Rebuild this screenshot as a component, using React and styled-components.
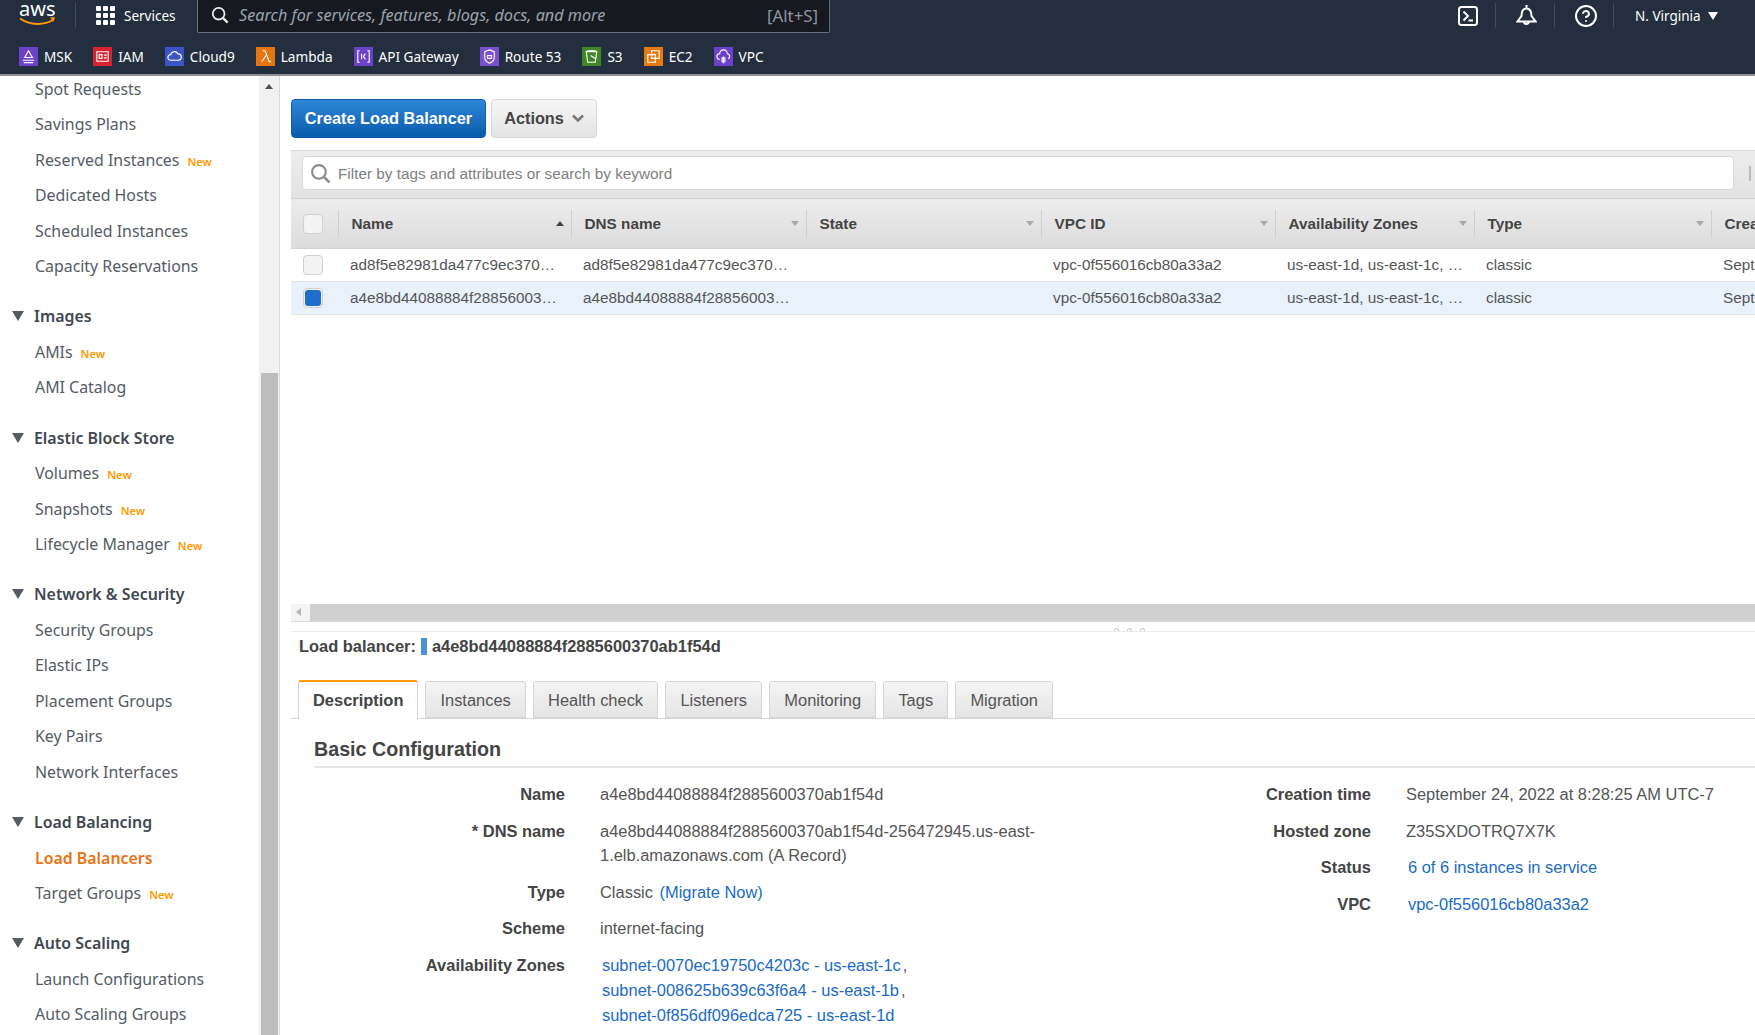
import React from "react";
import styled, { createGlobalStyle } from "styled-components";
import { CircleHelp } from "lucide-react";

const UI_FONT = `"Noto Sans", "Open Sans", sans-serif`;
const TABLE_FONT = `"Liberation Sans", Arial, sans-serif`;

const GRID_COLUMNS = "48px 233px 235px 235px 234px 199px 237px 260px";

const SHORTCUTS = [
    { name: "MSK", color: "#6b42c9", glyph: "M4 14h12M6 11h8M10 4l4 7H6zM5 16.5h10" },
    { name: "IAM", color: "#d9222f", glyph: "M4 5h12v10H4zM6.5 8h3v4h-3zM11.5 8.5h3M11.5 11.5h3" },
    { name: "Cloud9", color: "#3b55c9", glyph: "M6 14a3 3 0 0 1 0-6 4 4 0 0 1 7.5-.8A3.4 3.4 0 0 1 14 14z" },
    { name: "Lambda", color: "#e57512", glyph: "M7 4h2.5L14 15.5h2M10.5 9L6 15.5" },
    { name: "API Gateway", color: "#6b42c9", glyph: "M6 4H4v12h2M14 4h2v12h-2M8 7v6M12 7l-2 3 2 3" },
    { name: "Route 53", color: "#7a4fd0", glyph: "M10 3l5 2v6c0 3-2.500 5-5 6-2.500-1-5-3-5-6V5zM8 9h4v3H8z" },
    { name: "S3", color: "#3f8624", glyph: "M4.500 5h11l-1.500 11H6zM4.500 5c0-1.500 11-1.500 11 0M9 9l5 3" },
    { name: "EC2", color: "#e8790f", glyph: "M8 4h8v8H8zM4 8h8v8H4z" },
    { name: "VPC", color: "#6b42c9", glyph: "M6 13a3 3 0 0 1 0-6 4 4 0 0 1 8 0 3 3 0 0 1 1 5.500M10 10v7M8.500 11.500h3v4h-3z" },
];

const NAV_GROUPS = [
    {
        items: [
            { label: "Spot Requests" },
            { label: "Savings Plans" },
            { label: "Reserved Instances", isNew: true },
            { label: "Dedicated Hosts" },
            { label: "Scheduled Instances" },
            { label: "Capacity Reservations" },
        ],
    },
    {
        title: "Images",
        items: [{ label: "AMIs", isNew: true }, { label: "AMI Catalog" }],
    },
    {
        title: "Elastic Block Store",
        items: [
            { label: "Volumes", isNew: true },
            { label: "Snapshots", isNew: true },
            { label: "Lifecycle Manager", isNew: true },
        ],
    },
    {
        title: "Network & Security",
        items: [
            { label: "Security Groups" },
            { label: "Elastic IPs" },
            { label: "Placement Groups" },
            { label: "Key Pairs" },
            { label: "Network Interfaces" },
        ],
    },
    {
        title: "Load Balancing",
        items: [
            { label: "Load Balancers", active: true },
            { label: "Target Groups", isNew: true },
        ],
    },
    {
        title: "Auto Scaling",
        items: [{ label: "Launch Configurations" }, { label: "Auto Scaling Groups" }],
    },
];

const COLUMNS = [
    { label: "Name", sorted: true },
    { label: "DNS name" },
    { label: "State" },
    { label: "VPC ID" },
    { label: "Availability Zones" },
    { label: "Type" },
    { label: "Creation time" },
];

const ROWS = [
    {
        cells: [
            "ad8f5e82981da477c9ec370…",
            "ad8f5e82981da477c9ec370…",
            "",
            "vpc-0f556016cb80a33a2",
            "us-east-1d, us-east-1c, …",
            "classic",
            "September 24, 2022 at 8:20:11 AM UTC-7",
        ],
    },
    {
        selected: true,
        cells: [
            "a4e8bd44088884f28856003…",
            "a4e8bd44088884f28856003…",
            "",
            "vpc-0f556016cb80a33a2",
            "us-east-1d, us-east-1c, …",
            "classic",
            "September 24, 2022 at 8:28:25 AM UTC-7",
        ],
    },
];

const TABS = ["Description", "Instances", "Health check", "Listeners", "Monitoring", "Tags", "Migration"];

const GlobalStyle = createGlobalStyle`
    html, body, #root {
        margin: 0;
        height: 100%;
        overflow: hidden;
        background: #fff;
    }

    * {
        box-sizing: border-box;
    }
`;

const Page = styled.div`
    display: flex;
    flex-direction: column;
    width: 1755px;
    height: 1035px;
    overflow: hidden;
`;

const Header = styled.header`
    flex: none;
    height: 76px;
    background: #232f3e;
    border-bottom: 2px solid #8d9196;
    color: #fff;
    font-family: ${UI_FONT};
`;

const TopBar = styled.div`
    display: flex;
    align-items: flex-start;
    height: 37px;
    padding-left: 18px;
`;

const LogoBox = styled.div`
    width: 57px;
`;

const Divider = styled.span`
    flex: none;
    width: 1px;
    height: 25px;
    margin-top: 3px;
    background: #414c5a;
`;

const ServicesButton = styled.div`
    display: flex;
    align-items: center;
    gap: 9px;
    height: 31px;
    margin-left: 20px;
    width: 101px;
    font-size: 13.5px;
`;

const SearchBox = styled.div`
    display: flex;
    align-items: center;
    width: 633px;
    height: 33px;
    padding: 0 11px 2px 13px;
    background: #16191f;
    border: 1px solid #687078;
    border-top: none;
    border-radius: 0 0 2px 2px;
`;

const SearchPlaceholder = styled.span`
    flex: 1;
    margin-left: 10px;
    color: #9ba3ad;
    font-size: 16.200px;
    font-style: italic;
`;

const SearchHint = styled.span`
    color: #8f969f;
    font-size: 16.800px;
`;

const RightTools = styled.div`
    display: flex;
    align-items: flex-start;
    margin-left: auto;
    padding-right: 15px;
`;

const ToolIcon = styled.div`
    display: flex;
    align-items: center;
    justify-content: center;
    width: 58px;
    height: 31px;
    padding-left: 3px;
`;

const RegionButton = styled.div`
    display: flex;
    align-items: center;
    gap: 7px;
    height: 31px;
    width: 126px;
    padding-left: 21px;
    font-size: 13.5px;
`;

const ShortcutBar = styled.div`
    display: flex;
    align-items: center;
    gap: 21px;
    height: 37px;
    padding: 2px 0 0 19px;
`;

const Shortcut = styled.div`
    display: flex;
    align-items: center;
    gap: 6px;
    font-size: 13.600px;
`;

const Body = styled.div`
    flex: 1;
    display: flex;
    min-height: 0;
`;

const Sidebar = styled.aside`
    flex: none;
    display: flex;
    width: 280px;
    border-right: 1px solid #d5dbdb;
`;

const NavList = styled.nav`
    flex: none;
    width: 259px;
    overflow: hidden;
    font-family: ${UI_FONT};
    font-size: 15.900px;
    color: #545b64;
`;

const NavInner = styled.div`
    margin-top: -5px;
`;

const NavGroup = styled.div`
    margin-bottom: 14.700px;
`;

const NavTitle = styled.div`
    display: flex;
    align-items: center;
    height: 35.500px;
    padding-left: 12px;
    gap: 10px;
    color: #414750;
    font-weight: 600;
`;

const Triangle = styled.span`
    width: 0;
    height: 0;
    border-left: 6.500px solid transparent;
    border-right: 6.500px solid transparent;
    border-top: 10px solid #545b64;
`;

const NavItem = styled.div`
    display: flex;
    align-items: center;
    height: 35.500px;
    padding-left: 35px;
    color: ${(props) => (props.$active ? "#ec7211" : "#545b64")};
    font-weight: ${(props) => (props.$active ? 600 : 400)};
`;

const NewTag = styled.span`
    margin: 3px 0 0 8px;
    color: #ff9900;
    font-size: 11.200px;
    font-weight: 600;
`;

const VScroll = styled.div`
    flex: none;
    display: flex;
    flex-direction: column;
    align-items: center;
    width: 20px;
    background: #f1f1f1;
`;

const ScrollUp = styled.span`
    flex: none;
    width: 0;
    height: 0;
    margin-top: 8px;
    border-left: 4.500px solid transparent;
    border-right: 4.500px solid transparent;
    border-bottom: 5px solid #505050;
`;

const VThumb = styled.div`
    flex: none;
    width: 17px;
    height: 662px;
    margin-top: 284px;
    background: #bdbdbd;
`;

const Main = styled.main`
    flex: 1;
    min-width: 0;
    display: flex;
    flex-direction: column;
    padding-left: 11px;
    overflow: hidden;
    font-family: ${TABLE_FONT};
    color: #444;
`;

const ListPane = styled.section`
    flex: 1;
    display: flex;
    flex-direction: column;
    min-height: 0;
`;

const Toolbar = styled.div`
    flex: none;
    display: flex;
    gap: 5px;
    padding: 23px 0 12px;
`;

const PrimaryButton = styled.div`
    display: flex;
    align-items: center;
    justify-content: center;
    width: 195px;
    height: 39px;
    padding-bottom: 1px;
    border: 1px solid #0f5fae;
    border-radius: 4px;
    background: linear-gradient(#2f86d8, #0a5cad);
    color: #fff;
    font-size: 16.300px;
    font-weight: bold;
`;

const SecondaryButton = styled.div`
    display: flex;
    align-items: center;
    justify-content: center;
    gap: 8px;
    width: 106px;
    height: 39px;
    padding-bottom: 1px;
    border: 1px solid #d8d8d8;
    border-radius: 4px;
    background: linear-gradient(#f7f7f7, #e3e3e3);
    color: #444;
    font-size: 16.300px;
    font-weight: bold;
`;

const FilterBand = styled.div`
    flex: none;
    display: flex;
    align-items: center;
    height: 49px;
    padding: 0 0 3px 11px;
    background: linear-gradient(#ededed, #e2e2e2);
    border-top: 1px solid #d9d9d9;
    border-bottom: 1px solid #d2d2d2;
`;

const FilterInput = styled.div`
    display: flex;
    align-items: center;
    gap: 7px;
    width: 1432px;
    height: 34px;
    padding: 1px 0 0 7px;
    background: #fff;
    border: 1px solid #d8d8d8;
    border-radius: 4px;
    color: #808080;
    font-size: 15.300px;
`;

const FilterTick = styled.span`
    width: 2px;
    height: 15px;
    margin-left: 15px;
    background: #bbb;
`;

const TableHead = styled.div`
    flex: none;
    display: grid;
    grid-template-columns: ${GRID_COLUMNS};
    align-items: center;
    height: 50px;
    background: linear-gradient(#ececec, #dcdcdc);
    border-bottom: 1px solid #d2d2d2;
    font-size: 15.300px;
    font-weight: bold;
    color: #444;
`;

const HeadCheckCell = styled.div`
    display: flex;
    align-items: center;
    height: 28px;
    padding-left: 12px;
    border-right: 1px solid #cfcfcf;
`;

const HeadCell = styled.div`
    display: flex;
    align-items: center;
    justify-content: space-between;
    height: 28px;
    padding: 0 7px 0 12.500px;
    border-right: 1px solid #cfcfcf;
    white-space: nowrap;
    overflow: hidden;

    &:last-child {
        border-right: none;
    }
`;

const SortArrow = styled.span`
    flex: none;
    width: 0;
    height: 0;
    border-left: 4.500px solid transparent;
    border-right: 4.500px solid transparent;
    ${(props) =>
        props.$up ? "border-bottom: 5px solid #444;" : "border-top: 5px solid #a9a9a9;"}
`;

const TableRow = styled.div`
    flex: none;
    display: grid;
    grid-template-columns: ${GRID_COLUMNS};
    align-items: center;
    height: 33px;
    background: ${(props) => (props.$selected ? "#e9f1fb" : "#fff")};
    border-bottom: 1px solid #e3e3e3;
    font-size: 15.300px;
    color: #555;
`;

const CheckCell = styled.div`
    padding-left: 12px;
`;

const Cell = styled.div`
    padding-left: 11px;
    white-space: nowrap;
    overflow: hidden;
`;

const CheckBox = styled.div`
    display: flex;
    align-items: center;
    justify-content: center;
    width: 20px;
    height: 20px;
    border: 1px solid #d0d0d0;
    border-radius: 4px;
    background: #f4f4f4;
`;

const CheckMark = styled.span`
    width: 16px;
    height: 16px;
    border-radius: 3px;
    background: #1d6fcb;
`;

const Spacer = styled.div`
    flex: 1;
`;

const HScroll = styled.div`
    flex: none;
    display: flex;
    align-items: center;
    height: 18px;
    padding-bottom: 1px;
    background: #f4f4f4;
    border-bottom: 1px solid #dcdcdc;
`;

const ScrollLeft = styled.span`
    flex: none;
    width: 0;
    height: 0;
    margin: 0 9px 0 5px;
    border-top: 4px solid transparent;
    border-bottom: 4px solid transparent;
    border-right: 5px solid #b5b5b5;
`;

const HThumb = styled.div`
    flex: 1;
    height: 17px;
    background: #d0d0d0;
`;

const Splitter = styled.div`
    flex: none;
    display: flex;
    justify-content: center;
    align-items: flex-end;
    gap: 8px;
    height: 10px;
    padding-left: 212px;
    border-bottom: 1px solid #ececec;
`;

const SplitDot = styled.span`
    width: 5px;
    height: 3px;
    border: 1px solid #c9c9c9;
    border-bottom: none;
    border-radius: 3px 3px 0 0;
`;

const DetailPane = styled.section`
    flex: none;
    height: 403px;
    font-size: 16.450px;
`;

const SelectedBar = styled.div`
    display: flex;
    align-items: center;
    height: 30px;
    padding: 0 0 2px 8px;
    font-weight: bold;
    color: #444;
`;

const StatusSwatch = styled.span`
    width: 6px;
    height: 17px;
    margin: 0 5px 0 5px;
    background: #4b91d9;
`;

const TabBar = styled.div`
    display: flex;
    align-items: flex-end;
    gap: 6.700px;
    height: 39px;
    margin-top: 18px;
    padding-left: 7px;
    border-bottom: 1px solid #d5d5d5;
`;

const Tab = styled.div`
    display: flex;
    align-items: center;
    padding: ${(props) => (props.$active ? "0 14px" : "1px 14.300px 0")};
    height: ${(props) => (props.$active ? "39px" : "37px")};
    margin-bottom: ${(props) => (props.$active ? "-1px" : "0")};
    border: 1px solid #d5d5d5;
    border-bottom: ${(props) => (props.$active ? "none" : "1px solid #d5d5d5")};
    border-top: ${(props) => (props.$active ? "2px solid #ff9900" : "1px solid #d5d5d5")};
    border-radius: 3px 3px 0 0;
    background: ${(props) => (props.$active ? "#fff" : "linear-gradient(#f5f5f5, #e4e4e4)")};
    color: ${(props) => (props.$active ? "#444" : "#555")};
    font-weight: ${(props) => (props.$active ? "bold" : "normal")};
`;

const DetailBody = styled.div`
    padding-left: 23px;
`;

const SectionTitle = styled.h2`
    display: flex;
    align-items: center;
    height: 49px;
    margin: 0;
    padding-top: 14px;
    border-bottom: 2px solid #e6e6e6;
    color: #444;
    font-size: 19.700px;
    font-weight: bold;
`;

const Columns = styled.div`
    display: flex;
    padding-top: 14px;
`;

const FieldGrid = styled.dl`
    display: grid;
    grid-template-columns: ${(props) => props.$labelWidth}px ${(props) => props.$valueWidth}px;
    column-gap: 35px;
    row-gap: 12px;
    margin: 0;
    line-height: 24.500px;
    align-content: start;
`;

const FieldLabel = styled.dt`
    text-align: right;
    font-weight: bold;
    color: #444;
`;

const FieldValue = styled.dd`
    margin: 0;
    color: #555;
`;

const FieldLink = styled.a`
    color: #1a6bc4;
`;

const MigrateLink = styled(FieldLink)`
    margin-left: 2px;
`;

const LinkValue = styled.div`
    padding-left: 2px;
    line-height: 25px;
    color: #555;
`;

const Comma = styled.span`
    margin-left: 2px;
`;

function AwsLogo() {
    return (
        <svg width="42" height="28" viewBox="0 0 42 28">
            <text x="1" y="16" fill="#fff" fontFamily={UI_FONT} fontSize="20">aws</text>
            <path d="M2 18.500c10 7 24 7 33 1.500" fill="none" stroke="#ff9900" strokeWidth="2" />
            <path d="M32 17.500l5-.5-1.500 5z" fill="#ff9900" />
        </svg>
    );
}

function GridIcon() {
    const dots = [];
    for (let row = 0; row < 3; row++) {
        for (let col = 0; col < 3; col++) {
            dots.push(<rect key={row + "-" + col} x={col * 7} y={row * 7} width="5" height="5" rx="1" fill="#fff" />);
        }
    }
    return <svg width="19" height="19" viewBox="0 0 19 19">{dots}</svg>;
}

function SearchIcon({ color, size }) {
    return (
        <svg width={size} height={size} viewBox="0 0 20 20" fill="none" stroke={color} strokeWidth="2">
            <circle cx="8.500" cy="8.500" r="6.500" />
            <path d="M13.500 13.500L18.500 18.500" strokeWidth="2.500" />
        </svg>
    );
}

function TerminalIcon() {
    return (
        <svg width="20" height="20" viewBox="0 0 20 20" fill="none" stroke="#fff" strokeWidth="2">
            <rect x="1" y="1" width="18" height="18" rx="2.500" />
            <path d="M5.500 5.500l4.500 4.500-4.500 4.500M10.500 14.500h4.500" />
        </svg>
    );
}

function BellIcon() {
    return (
        <svg width="21" height="22" viewBox="0 0 21 22" fill="none" stroke="#fff" strokeWidth="2">
            <path d="M10.500 0v3M5.500 11c0-5 2-7.500 5-7.500s5 2.500 5 7.500l4 5.500H1.500zM8 16.500a2.500 2.500 0 0 0 5 0" />
        </svg>
    );
}

function ShortcutIcon({ color, glyph }) {
    return (
        <svg width="19" height="19" viewBox="0 0 20 20">
            <rect width="20" height="20" fill={color} />
            <path d={glyph} fill="none" stroke="#fff" strokeWidth="1.200" />
        </svg>
    );
}

function NavSection({ title, items }) {
    return (
        <NavGroup>
            {title ? (
                <NavTitle>
                    <Triangle />
                    {title}
                </NavTitle>
            ) : null}
            {items.map((item) => (
                <NavItem key={item.label} $active={item.active}>
                    {item.label}
                    {item.isNew ? <NewTag>New</NewTag> : null}
                </NavItem>
            ))}
        </NavGroup>
    );
}

export default function App() {
    return (
        <Page>
            <GlobalStyle />
            <Header>
                <TopBar>
                    <LogoBox>
                        <AwsLogo />
                    </LogoBox>
                    <Divider />
                    <ServicesButton>
                        <GridIcon />
                        Services
                    </ServicesButton>
                    <SearchBox>
                        <SearchIcon color="#eaeded" size={18} />
                        <SearchPlaceholder>Search for services, features, blogs, docs, and more</SearchPlaceholder>
                        <SearchHint>[Alt+S]</SearchHint>
                    </SearchBox>
                    <RightTools>
                        <ToolIcon><TerminalIcon /></ToolIcon>
                        <Divider />
                        <ToolIcon><BellIcon /></ToolIcon>
                        <Divider />
                        <ToolIcon><CircleHelp size={24} color="#fff" strokeWidth={2} /></ToolIcon>
                        <Divider />
                        <RegionButton>
                            N. Virginia
                            <svg width="10" height="8" viewBox="0 0 10 8"><path d="M0 0h10L5 8z" fill="#fff" /></svg>
                        </RegionButton>
                    </RightTools>
                </TopBar>
                <ShortcutBar>
                    {SHORTCUTS.map((item) => (
                        <Shortcut key={item.name}>
                            <ShortcutIcon color={item.color} glyph={item.glyph} />
                            {item.name}
                        </Shortcut>
                    ))}
                </ShortcutBar>
            </Header>
            <Body>
                <Sidebar>
                    <NavList>
                        <NavInner>
                            {NAV_GROUPS.map((group, index) => (
                                <NavSection key={"group-" + index} title={group.title} items={group.items} />
                            ))}
                        </NavInner>
                    </NavList>
                    <VScroll>
                        <ScrollUp />
                        <VThumb />
                    </VScroll>
                </Sidebar>
                <Main>
                    <ListPane>
                        <Toolbar>
                            <PrimaryButton>Create Load Balancer</PrimaryButton>
                            <SecondaryButton>
                                Actions
                                <svg width="12" height="9" viewBox="0 0 12 9"><path d="M1 1.500l5 5 5-5" fill="none" stroke="#777" strokeWidth="2.500" /></svg>
                            </SecondaryButton>
                        </Toolbar>
                        <FilterBand>
                            <FilterInput>
                                <SearchIcon color="#8c8c8c" size={21} />
                                Filter by tags and attributes or search by keyword
                            </FilterInput>
                            <FilterTick />
                        </FilterBand>
                        <TableHead>
                            <HeadCheckCell><CheckBox /></HeadCheckCell>
                            {COLUMNS.map((col) => (
                                <HeadCell key={col.label}>
                                    {col.label}
                                    <SortArrow $up={col.sorted} />
                                </HeadCell>
                            ))}
                        </TableHead>
                        {ROWS.map((row, index) => (
                            <TableRow key={"row-" + index} $selected={row.selected}>
                                <CheckCell>
                                    <CheckBox>{row.selected ? <CheckMark /> : null}</CheckBox>
                                </CheckCell>
                                {row.cells.map((text, cellIndex) => (
                                    <Cell key={"cell-" + cellIndex}>{text}</Cell>
                                ))}
                            </TableRow>
                        ))}
                        <Spacer />
                        <HScroll>
                            <ScrollLeft />
                            <HThumb />
                        </HScroll>
                        <Splitter>
                            <SplitDot />
                            <SplitDot />
                            <SplitDot />
                        </Splitter>
                    </ListPane>
                    <DetailPane>
                        <SelectedBar>
                            Load balancer:
                            <StatusSwatch />
                            a4e8bd44088884f2885600370ab1f54d
                        </SelectedBar>
                        <TabBar>
                            {TABS.map((tab, index) => (
                                <Tab key={tab} $active={index === 0}>{tab}</Tab>
                            ))}
                        </TabBar>
                        <DetailBody>
                            <SectionTitle>Basic Configuration</SectionTitle>
                            <Columns>
                                <FieldGrid $labelWidth={251} $valueWidth={440}>
                                    <FieldLabel>Name</FieldLabel>
                                    <FieldValue>a4e8bd44088884f2885600370ab1f54d</FieldValue>
                                    <FieldLabel>* DNS name</FieldLabel>
                                    <FieldValue>a4e8bd44088884f2885600370ab1f54d-256472945.us-east-1.elb.amazonaws.com (A Record)</FieldValue>
                                    <FieldLabel>Type</FieldLabel>
                                    <FieldValue>Classic <MigrateLink>(Migrate Now)</MigrateLink></FieldValue>
                                    <FieldLabel>Scheme</FieldLabel>
                                    <FieldValue>internet-facing</FieldValue>
                                    <FieldLabel>Availability Zones</FieldLabel>
                                    <FieldValue>
                                        <LinkValue><FieldLink>subnet-0070ec19750c4203c - us-east-1c</FieldLink><Comma>,</Comma></LinkValue>
                                        <LinkValue><FieldLink>subnet-008625b639c63f6a4 - us-east-1b</FieldLink><Comma>,</Comma></LinkValue>
                                        <LinkValue><FieldLink>subnet-0f856df096edca725 - us-east-1d</FieldLink></LinkValue>
                                    </FieldValue>
                                </FieldGrid>
                                <FieldGrid $labelWidth={331} $valueWidth={360}>
                                    <FieldLabel>Creation time</FieldLabel>
                                    <FieldValue>September 24, 2022 at 8:28:25 AM UTC-7</FieldValue>
                                    <FieldLabel>Hosted zone</FieldLabel>
                                    <FieldValue>Z35SXDOTRQ7X7K</FieldValue>
                                    <FieldLabel>Status</FieldLabel>
                                    <LinkValue><FieldLink>6 of 6 instances in service</FieldLink></LinkValue>
                                    <FieldLabel>VPC</FieldLabel>
                                    <LinkValue><FieldLink>vpc-0f556016cb80a33a2</FieldLink></LinkValue>
                                </FieldGrid>
                            </Columns>
                        </DetailBody>
                    </DetailPane>
                </Main>
            </Body>
        </Page>
    );
}
